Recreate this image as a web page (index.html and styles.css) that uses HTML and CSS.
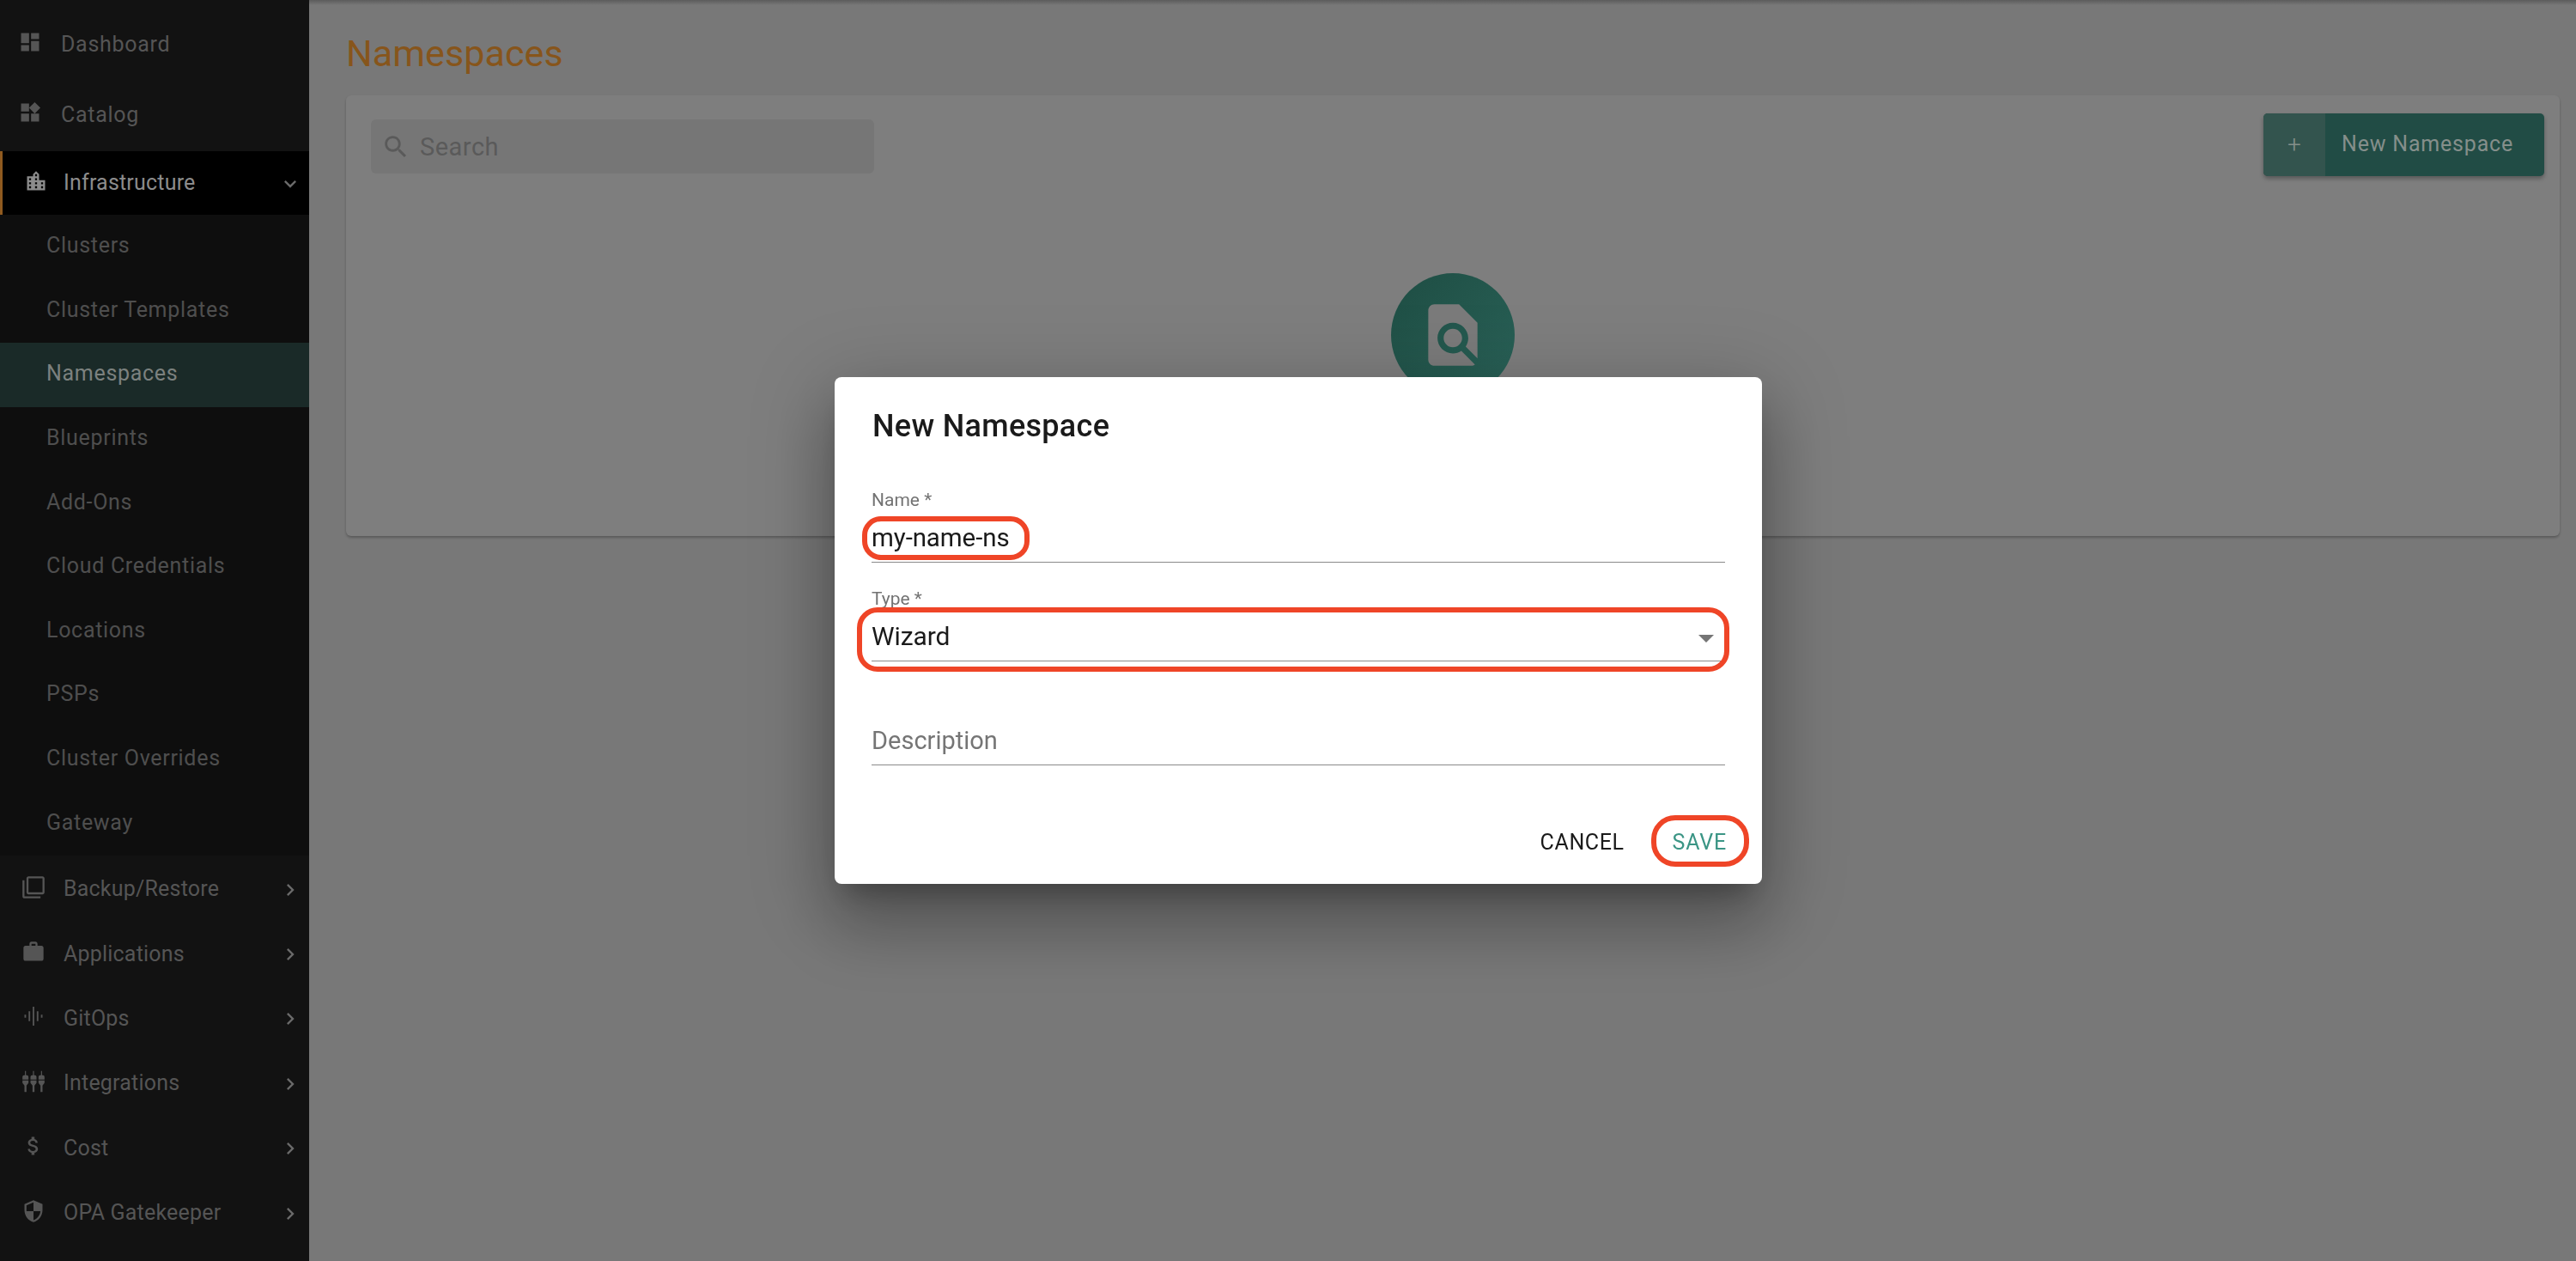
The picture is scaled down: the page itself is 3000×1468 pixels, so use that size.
FILE: index.html
```html
<!DOCTYPE html>
<html lang="en">
<head>
  <meta charset="UTF-8" />
  <title>Namespaces</title>
  <link rel="stylesheet" href="styles.css">
</head>
<body>

  <aside class="sidenav">
    <a class="nav-item top">
      <svg class="icon" viewBox="0 0 24 24"><path d="M3 13h8V3H3v10zm0 8h8v-6H3v6zm10 0h8V11h-8v10zm0-18v6h8V3h-8z"/></svg>
      <span>Dashboard</span>
    </a>
    <a class="nav-item top">
      <svg class="icon" viewBox="0 0 24 24"><path d="M13 13v8h8v-8h-8zM3 21h8v-8H3v8zM3 3v8h8V3H3zm13.66-1.31L11 7.34 16.66 13l5.66-5.66-5.66-5.65z"/></svg>
      <span>Catalog</span>
    </a>
    <a class="nav-item open">
      <svg class="icon" viewBox="0 0 24 24"><path d="M15 11V5l-3-3-3 3v2H3v14h18V11h-6zm-8 8H5v-2h2v2zm0-4H5v-2h2v2zm0-4H5V9h2v2zm6 8h-2v-2h2v2zm0-4h-2v-2h2v2zm0-4h-2V9h2v2zm0-4h-2V5h2v2zm6 12h-2v-2h2v2zm0-4h-2v-2h2v2z"/></svg>
      <span>Infrastructure</span>
      <svg class="chevron" viewBox="0 0 24 24"><path d="M7.41 8.59L12 13.17l4.59-4.58L18 10l-6 6-6-6z"/></svg>
    </a>
    <div class="submenu">
      <a class="sub-item">Clusters</a>
      <a class="sub-item">Cluster Templates</a>
      <a class="sub-item active">Namespaces</a>
      <a class="sub-item">Blueprints</a>
      <a class="sub-item">Add-Ons</a>
      <a class="sub-item">Cloud Credentials</a>
      <a class="sub-item">Locations</a>
      <a class="sub-item">PSPs</a>
      <a class="sub-item">Cluster Overrides</a>
      <a class="sub-item">Gateway</a>
    </div>
    <a class="nav-item">
      <svg class="icon" viewBox="0 0 24 24"><path d="M3 5H1v16c0 1.1.9 2 2 2h16v-2H3V5zm18-4H7c-1.1 0-2 .9-2 2v14c0 1.1.9 2 2 2h14c1.1 0 2-.9 2-2V3c0-1.1-.9-2-2-2zm0 16H7V3h14v14z"/></svg>
      <span>Backup/Restore</span>
      <svg class="chevron" viewBox="0 0 24 24"><path d="M8.59 16.59L13.17 12 8.59 7.41 10 6l6 6-6 6z"/></svg>
    </a>
    <a class="nav-item">
      <svg class="icon" viewBox="0 0 24 24"><path d="M20 6h-4V4c0-1.11-.89-2-2-2h-4c-1.11 0-2 .89-2 2v2H4c-1.11 0-1.99.89-1.99 2L2 19c0 1.11.89 2 2 2h16c1.11 0 2-.89 2-2V8c0-1.11-.89-2-2-2zm-6 0h-4V4h4v2z"/></svg>
      <span>Applications</span>
      <svg class="chevron" viewBox="0 0 24 24"><path d="M8.59 16.59L13.17 12 8.59 7.41 10 6l6 6-6 6z"/></svg>
    </a>
    <a class="nav-item">
      <svg class="icon" viewBox="0 0 24 24"><path d="M3 10.500h1.600v3H3zM7.100 7h1.600v10H7.100zM11.200 2.500h1.600v19h-1.600zM15.300 7h1.600v10h-1.600zM19.400 10.500H21v3h-1.600z"/></svg>
      <span>GitOps</span>
      <svg class="chevron" viewBox="0 0 24 24"><path d="M8.59 16.59L13.17 12 8.59 7.41 10 6l6 6-6 6z"/></svg>
    </a>
    <a class="nav-item">
      <svg class="icon" viewBox="0 0 24 24"><path d="M3.500 1.500h1v4h-1zM1 7.500a3 2 0 0 1 6 0V10H1zM1 11h6v2.500L5 16v6.500H3V16l-2-2.500zM11.500 1.500h1v4h-1zM9 7.500a3 2 0 0 1 6 0V10H9zM9 11h6v2.500L13 16v6.500h-2V16l-2-2.500zM19.500 1.500h1v4h-1zM17 7.500a3 2 0 0 1 6 0V10h-6zM17 11h6v2.500L21 16v6.500h-2V16l-2-2.500z"/></svg>
      <span>Integrations</span>
      <svg class="chevron" viewBox="0 0 24 24"><path d="M8.59 16.59L13.17 12 8.59 7.41 10 6l6 6-6 6z"/></svg>
    </a>
    <a class="nav-item">
      <svg class="icon" viewBox="0 0 24 24"><path d="M11.8 10.900c-2.270-.590-3-1.200-3-2.150 0-1.090 1.010-1.850 2.700-1.850 1.780 0 2.440.850 2.500 2.100h2.210c-.070-1.720-1.120-3.300-3.210-3.810V3h-3v2.160c-1.940.420-3.500 1.680-3.500 3.610 0 2.310 1.910 3.460 4.700 4.130 2.500.600 3 1.480 3 2.410 0 .690-.490 1.790-2.700 1.790-2.060 0-2.870-.920-2.980-2.100h-2.200c.120 2.190 1.760 3.420 3.680 3.830V21h3v-2.150c1.950-.370 3.500-1.500 3.500-3.550 0-2.840-2.430-3.810-4.700-4.400z"/></svg>
      <span>Cost</span>
      <svg class="chevron" viewBox="0 0 24 24"><path d="M8.59 16.59L13.17 12 8.59 7.41 10 6l6 6-6 6z"/></svg>
    </a>
    <a class="nav-item">
      <svg class="icon" viewBox="0 0 24 24"><path d="M12 1L3 5v6c0 5.550 3.840 10.740 9 12 5.160-1.260 9-6.450 9-12V5l-9-4zm0 10.990h7c-.530 4.120-3.280 7.790-7 8.940V12H5V6.300l7-3.110v8.800z"/></svg>
      <span>OPA Gatekeeper</span>
      <svg class="chevron" viewBox="0 0 24 24"><path d="M8.59 16.59L13.17 12 8.59 7.41 10 6l6 6-6 6z"/></svg>
    </a>
  </aside>

  <main class="page">
    <h1 class="page-title">Namespaces</h1>
    <section class="card">
      <div class="toolbar">
        <div class="search">
          <svg class="search-icon" viewBox="0 0 24 24"><path d="M15.500 14h-.790l-.280-.270C15.410 12.590 16 11.110 16 9.500 16 5.910 13.090 3 9.500 3S3 5.910 3 9.500 5.910 16 9.500 16c1.610 0 3.090-.590 4.230-1.570l.270.280v.790l5 4.990L20.490 19l-4.990-5zm-6 0C7.010 14 5 11.990 5 9.500S7.010 5 9.500 5 14 7.010 14 9.500 11.990 14 9.500 14z"/></svg>
          <span>Search</span>
        </div>
        <div class="new-btn">
          <span class="new-btn-plus">+</span>
          <span class="new-btn-label">New Namespace</span>
        </div>
      </div>
      <div class="empty-circle">
        <svg viewBox="0 0 24 24"><path d="M20 19.590V8l-6-6H6c-1.100 0-1.990.900-1.990 2L4 20c0 1.100.890 2 1.990 2H18c.450 0 .850-.150 1.190-.400l-4.430-4.430c-.800.520-1.740.830-2.760.830-2.760 0-5-2.240-5-5s2.240-5 5-5 5 2.240 5 5c0 1.020-.310 1.960-.830 2.750L20 19.590zM9 13c0 1.660 1.340 3 3 3s3-1.340 3-3-1.340-3-3-3-3 1.340-3 3z"/></svg>
      </div>
    </section>
  </main>

  <div class="backdrop">
    <div class="dialog">
      <h2 class="dialog-title">New Namespace</h2>

      <div class="field field-name">
        <label>Name *</label>
        <div class="field-value">my-name-ns</div>
      </div>
      <div class="field field-type">
        <label>Type *</label>
        <div class="field-value">Wizard<i class="caret"></i></div>
      </div>
      <div class="field field-desc">
        <div class="field-value placeholder">Description</div>
      </div>

      <div class="dialog-actions">
        <a class="action">CANCEL</a>
        <a class="action save">SAVE</a>
      </div>

      <!-- red marks drawn on the screenshot -->
      <div class="mark mark-name"></div>
      <div class="mark mark-type"></div>
      <div class="mark mark-save"></div>
    </div>
  </div>

</body>
</html>
```

FILE: styles.css
```css
* { box-sizing: border-box; }
html, body { height: 100%; }
body { margin: 0; display: flex; overflow: hidden; background: #787878; font-family: Roboto, "Liberation Sans", sans-serif; }

.sidenav { width: 360px; flex: none; height: 100%; padding-top: 10px; background: #121212; color: #555; font-size: 25px; letter-spacing: 0.6px; }
.nav-item { display: flex; align-items: center; height: 75.4px; padding: 2px 8px 0 25px; letter-spacing: 0.2px; }
.nav-item span { margin-left: 21px; }
.nav-item.top { height: 82px; padding: 0 0 0 21px; letter-spacing: 0.7px; }
.nav-item.top span { margin-left: 22px; }
.nav-item.open { height: 74px; margin-top: 2px; padding: 0 8px 1px 25px; background: #000; border-left: 3px solid #8f5a1f; color: #8c8c8c; }
.nav-item.open span { margin-left: 18px; }
.icon { width: 28px; height: 28px; flex: none; fill: currentColor; }
.nav-item .icon { margin-top: -4px; }
.chevron { width: 28px; height: 28px; flex: none; margin-left: auto; margin-top: 2px; fill: #6a6a6a; }
.submenu { background: #0e0e0e; }
.sub-item { display: flex; align-items: center; height: 74.6px; padding: 0 0 3px 54px; color: #4e4e4e; letter-spacing: 0.7px; }
.sub-item.active { background: #1a2a28; color: #7c817f; }

.page { flex: 1; padding: 0 19px 0 43px; background: linear-gradient(#5c5c5c, #787878 6px); }
.page-title { margin: 0; padding-top: 37px; height: 111px; font-size: 43px; line-height: 50px; font-weight: 400; letter-spacing: 0.1px; color: #87551b; }
.card { height: 513px; background: #7e7e7e; border-radius: 6px; box-shadow: 0 2px 3px rgba(0,0,0,.25); }
.toolbar { display: flex; justify-content: space-between; align-items: flex-start; padding: 21px 18px 0 29px; }
.search { display: flex; align-items: center; width: 586px; height: 63px; margin-top: 7px; padding-left: 12px; background: #767676; border-radius: 6px; color: #5a5a5a; font-size: 29px; letter-spacing: 0.5px; }
.search-icon { width: 34px; height: 34px; margin-right: 11px; fill: #5a5a5a; }
.new-btn { display: flex; width: 327px; height: 73px; background: #214c45; border-radius: 5px; overflow: hidden; box-shadow: 0 3px 5px rgba(0,0,0,.3); color: #858f8b; }
.new-btn-plus { width: 72px; display: flex; align-items: center; justify-content: center; background: #33544e; font-size: 28px; font-weight: 300; }
.new-btn-label { padding-left: 19px; line-height: 71px; font-size: 25px; letter-spacing: 0.8px; }
.empty-circle { width: 144px; height: 144px; margin: 113px auto 0; display: flex; align-items: center; justify-content: center; border-radius: 50%; background: linear-gradient(135deg, #1e4d43, #2a6359); }
.empty-circle svg { width: 86px; height: 86px; fill: #7b7b7b; }

.backdrop { position: fixed; inset: 0; display: flex; align-items: center; justify-content: center; padding-left: 24px; }
.dialog { position: relative; width: 1080px; height: 590px; padding: 0 43px; background: #fff; border-radius: 8px; box-shadow: 0 22px 30px -14px rgba(0,0,0,.28), 0 48px 76px 6px rgba(0,0,0,.2), 0 18px 92px 16px rgba(0,0,0,.16); color: #1a1a1a; }
.dialog-title { margin: 0 0 0 1px; padding-top: 36px; height: 134px; font-size: 36px; line-height: 42px; font-weight: 500; letter-spacing: 0.3px; }
.field { position: relative; border-bottom: 1px solid #8a8a8a; }
.field label { display: block; color: #737373; font-size: 21px; line-height: 24px; }
.field-value { font-size: 30px; line-height: 40px; letter-spacing: -0.1px; }
.field-name { height: 85px; margin-top: -3px; }
.field-name .field-value { margin-top: 12px; font-size: 29.500px; }
.field-type { height: 85px; margin-top: 30px; }
.field-type .field-value { margin-top: 12px; }
.field-desc { height: 62px; margin-top: 59px; padding-top: 13px; }
.placeholder { color: #757575; font-size: 29px; letter-spacing: 0; }
.caret { position: absolute; right: 13px; top: 54px; border: 9px solid transparent; border-top-color: #757575; border-bottom: 0; }
.dialog-actions { position: absolute; right: 41px; bottom: 32px; display: flex; gap: 56px; font-size: 25px; line-height: 32px; letter-spacing: 0.6px; }
.save { color: #3b9585; letter-spacing: 0.8px; }

.mark { position: absolute; border: 6px solid #ef4527; pointer-events: none; }
.mark-name { left: 32px; top: 162px; width: 195px; height: 51px; border-radius: 22px; }
.mark-type { left: 26px; top: 268px; width: 1016px; height: 75px; border-radius: 24px; }
.mark-save { left: 951px; top: 510px; width: 114px; height: 60px; border-radius: 28px; }
```
